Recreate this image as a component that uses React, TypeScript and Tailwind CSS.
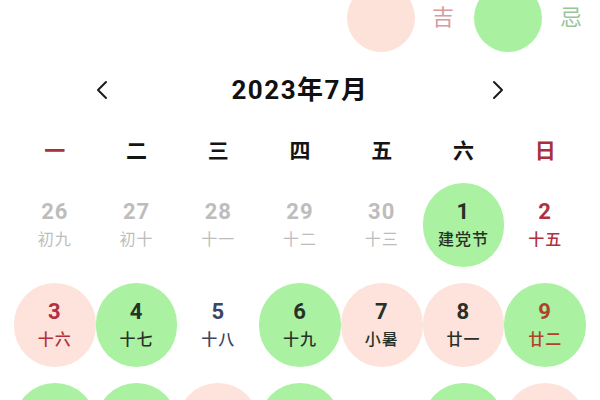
import React from 'react';

type Day = {
  n: number;
  lunar: string;
  mark?: 'good' | 'bad';
  tone?: 'gray' | 'red' | 'dark' | 'slate' | 'brown';
};

const weekdays = ['一', '二', '三', '四', '五', '六', '日'];

const days: Day[] = [
  { n: 26, lunar: '初九', tone: 'gray' },
  { n: 27, lunar: '初十', tone: 'gray' },
  { n: 28, lunar: '十一', tone: 'gray' },
  { n: 29, lunar: '十二', tone: 'gray' },
  { n: 30, lunar: '十三', tone: 'gray' },
  { n: 1, lunar: '建党节', mark: 'good', tone: 'dark' },
  { n: 2, lunar: '十五', tone: 'red' },
  { n: 3, lunar: '十六', mark: 'bad', tone: 'red' },
  { n: 4, lunar: '十七', mark: 'good', tone: 'dark' },
  { n: 5, lunar: '十八', tone: 'slate' },
  { n: 6, lunar: '十九', mark: 'good', tone: 'dark' },
  { n: 7, lunar: '小暑', mark: 'bad', tone: 'dark' },
  { n: 8, lunar: '廿一', mark: 'bad', tone: 'dark' },
  { n: 9, lunar: '廿二', mark: 'good', tone: 'brown' },
  { n: 10, lunar: '廿三', mark: 'good', tone: 'red' },
  { n: 11, lunar: '廿四', mark: 'good', tone: 'dark' },
  { n: 12, lunar: '廿五', mark: 'bad', tone: 'dark' },
  { n: 13, lunar: '廿六', mark: 'good', tone: 'dark' },
  { n: 14, lunar: '廿七', tone: 'dark' },
  { n: 15, lunar: '廿八', mark: 'good', tone: 'dark' },
  { n: 16, lunar: '廿九', mark: 'bad', tone: 'red' },
];

const toneClass: Record<string, string> = {
  gray: 'text-[#bdbdbd]',
  red: 'text-[#b3303f]',
  dark: 'text-[#283128]',
  slate: 'text-[#3d4560]',
  brown: 'text-[#b0412c]',
};

function Chevron({ dir }: { dir: 'left' | 'right' }) {
  return (
    <svg width="14" height="20" viewBox="0 0 14 20" fill="none">
      <polyline
        points={dir === 'left' ? '11,2 3,10 11,18' : '3,2 11,10 3,18'}
        stroke="#1a1a1a"
        strokeWidth="2"
        strokeLinecap="round"
        strokeLinejoin="round"
      />
    </svg>
  );
}

export default function App() {
  return (
    <div className="w-[600px] h-[400px] overflow-hidden bg-white font-['Roboto','Noto_Sans_CJK_SC',sans-serif]">
      {/* legend */}
      <div className="flex items-center justify-end -mt-[16px] h-[68px] pr-[18px]">
        <div className="w-[68px] h-[68px] rounded-full bg-[#fde2da]" />
        <span className="ml-[17px] text-[22px] text-[#d89a9c] leading-none">吉</span>
        <div className="ml-[20px] w-[68px] h-[68px] rounded-full bg-[#a9f1a0]" />
        <span className="ml-[18px] text-[22px] text-[#98c69a] leading-none">忌</span>
      </div>

      {/* month header */}
      <div className="flex items-center justify-between h-[76px] pl-[95px] pr-[95px]">
        <Chevron dir="left" />
        <span className="text-[26px] font-bold text-[#111] tracking-[1.5px]">2023年7月</span>
        <Chevron dir="right" />
      </div>

      {/* weekdays */}
      <div className="grid grid-cols-7 px-[14px] h-[48px] items-center">
        {weekdays.map((w, i) => (
          <span
            key={w}
            className={`text-center text-[21px] font-bold ${i === 0 || i === 6 ? 'text-[#a8303c]' : 'text-[#141414]'}`}
          >
            {w}
          </span>
        ))}
      </div>

      {/* days */}
      <div className="grid grid-cols-7 gap-y-[16px] px-[14px] mt-[7px]">
        {days.map((d) => (
          <div
            key={`${d.n}-${d.lunar}`}
            className={`h-[84px] rounded-full flex flex-col items-center justify-center gap-[8px] ${
              d.mark === 'good' ? 'bg-[#aaf1a2]' : d.mark === 'bad' ? 'bg-[#fde3db]' : ''
            } ${toneClass[d.tone ?? 'dark']}`}
          >
            <span className="text-[22px] font-bold leading-[22px] tracking-[1px]">{d.n}</span>
            <span
              className={`text-[16px] leading-[18px] tracking-[1px] ${d.tone === 'gray' ? 'font-normal' : 'font-medium'}`}
            >
              {d.lunar}
            </span>
          </div>
        ))}
      </div>
    </div>
  );
}
